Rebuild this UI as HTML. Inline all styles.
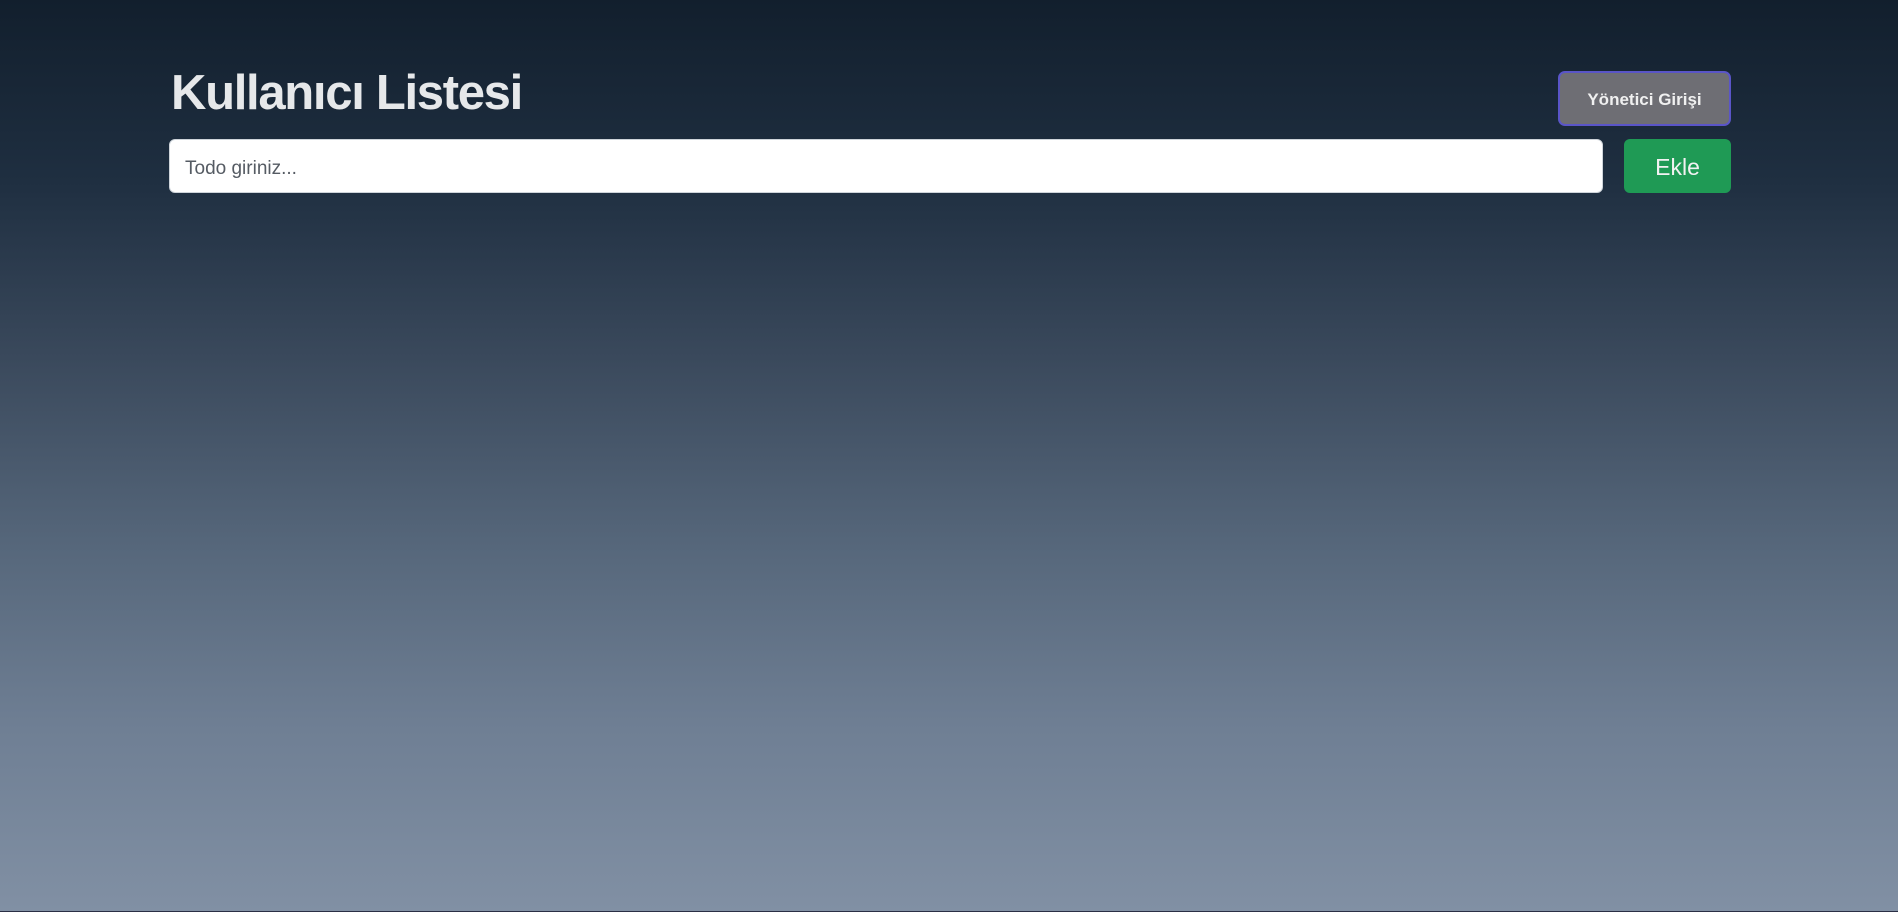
<!DOCTYPE html>
<html><head><meta charset="utf-8"><style>
html,body{margin:0;padding:0;width:1898px;height:912px;overflow:hidden}
body{background:linear-gradient(180deg,#121f2d 0%,#1f2f41 20%,#3b4a5d 40%,#56677b 60%,#6f7f94 80%,#8190a4 100%);font-family:"Liberation Sans",sans-serif;position:relative}
h1{position:absolute;left:171px;top:65px;margin:0;font-size:49px;font-weight:bold;color:#e6e8ea;letter-spacing:-1.3px}
.inp{position:absolute;left:169px;top:139px;width:1434px;height:54px;box-sizing:border-box;background:#fff;border:1px solid #ced4da;border-radius:6px;font-size:19px;color:#555b63;padding:0 15px;line-height:58px}
.ekle{position:absolute;left:1624px;top:139px;width:107px;height:54px;background:#1f9a55;border-radius:6px;color:#f2f2f2;font-size:23px;text-align:center;line-height:56px}
.yon{position:absolute;left:1558px;top:71px;width:173px;height:55px;box-sizing:border-box;background:#6e6e74;border:2px solid #5a55c8;border-radius:7px;color:#f0f0f0;font-size:17px;font-weight:bold;text-align:center;line-height:53px}
.bot{position:absolute;left:0;bottom:0;width:100%;height:1px;background:#2a2f45}
</style></head><body>
<h1>Kullanıcı Listesi</h1>
<div class="inp">Todo giriniz...</div>
<div class="ekle">Ekle</div>
<div class="yon">Yönetici Girişi</div>
<div class="bot"></div>
</body></html>
